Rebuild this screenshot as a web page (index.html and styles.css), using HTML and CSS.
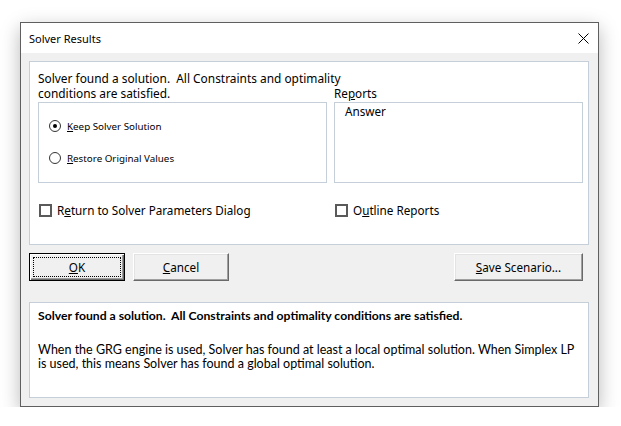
FILE: index.html
```html
<!DOCTYPE html>
<html>
<head>
    <title>Solver Results</title>
    <link rel="stylesheet" href="styles.css">
</head>
<body>
    <div class="dialog">
        <div class="titlebar">
            <span class="title">Solver Results</span>
            <svg class="close" width="11" height="11" viewBox="0 0 11 11">
                <path d="M0.5 0.5 L10.5 10.5 M10.5 0.5 L0.5 10.5" stroke="#000" stroke-width="1" fill="none"/>
            </svg>
        </div>

        <div class="client">
            <div class="panel">
                <div class="message first">Solver found a solution.&nbsp; All Constraints and optimality</div>
                <div class="message">conditions are satisfied.</div>
                <div class="reports-label">Re<u>p</u>orts</div>

                <div class="groupbox">
                    <label class="radio-row">
                        <span class="radio checked"></span>
                        <span><u>K</u>eep Solver Solution</span>
                    </label>
                    <label class="radio-row">
                        <span class="radio"></span>
                        <span><u>R</u>estore Original Values</span>
                    </label>
                </div>
                <div class="listbox">
                    <div class="list-item">Answer</div>
                </div>

                <label class="check-row">
                    <span class="checkbox"></span>
                    <span>R<u>e</u>turn to Solver Parameters Dialog</span>
                </label>
                <label class="check-row">
                    <span class="checkbox"></span>
                    <span>O<u>u</u>tline Reports</span>
                </label>
            </div>

            <div class="buttons">
                <button class="btn default"><u>O</u>K</button>
                <button class="btn"><u>C</u>ancel</button>
                <button class="btn wide"><u>S</u>ave Scenario...</button>
            </div>

            <div class="info">
                <p class="info-title">Solver found a solution.&nbsp; All Constraints and optimality conditions are satisfied.</p>
                <p class="info-text">When the GRG engine is used, Solver has found at least a local optimal solution. When Simplex LP is used, this means Solver has found a global optimal solution.</p>
            </div>
        </div>
    </div>
</body>
</html>
```

FILE: styles.css
```css
body {
    margin: 0;
    background: #fff;
    font-family: "Noto Sans", sans-serif;
    font-size: 11.7px;
    color: #000;
}

u {
    text-decoration: underline;
    text-underline-offset: 1px;
}

.dialog {
    width: 577px;
    height: 383px;
    margin: 22px 0 0 20px;
    border: 1px solid #5f5f5f;
    background: #f0f0f0;
    box-shadow: 0 6px 18px rgba(0, 0, 0, .28);
    display: flex;
    flex-direction: column;
}

.titlebar {
    flex-shrink: 0;
    height: 30px;
    background: #fff;
    display: flex;
    align-items: center;
    justify-content: space-between;
    padding: 0 9px 0 8px;
}

.title {
    font-size: 11px;
}

.client {
    flex: 1;
    display: flex;
    flex-direction: column;
    padding: 8px 9px 8px 8px;
}

.panel {
    flex-shrink: 0;
    height: 184px;
    box-sizing: border-box;
    background: #fff;
    border: 1px solid #c5cfd9;
    padding: 9px 5px 0 8px;
    display: grid;
    grid-template-columns: 289px 249px;
    grid-template-rows: 15px 15px 82px auto;
    column-gap: 7px;
}

.message {
    line-height: 15px;
    font-size: 11.9px;
    white-space: nowrap;
}

.message.first {
    grid-column: 1 / -1;
}

.reports-label {
    line-height: 15px;
}

.groupbox,
.listbox {
    border: 1px solid #c5cfd9;
    box-sizing: border-box;
    margin-top: 1px;
}

.groupbox {
    padding: 15px 0 0 10px;
    display: flex;
    flex-direction: column;
    gap: 16px;
}

.radio-row {
    display: flex;
    align-items: center;
    gap: 6px;
    height: 16px;
    font-size: 9.8px;
}

.radio {
    width: 10px;
    height: 10px;
    border: 1px solid #333;
    border-radius: 50%;
    background: #fff;
    position: relative;
}

.radio.checked::after {
    content: "";
    position: absolute;
    left: 3px;
    top: 3px;
    width: 4px;
    height: 4px;
    border-radius: 50%;
    background: #000;
}

.listbox {
    padding: 1px 10px;
    line-height: 15px;
}

.check-row {
    display: flex;
    align-items: center;
    gap: 5px;
    margin: 20px 0 0 1px;
    height: 14px;
}

.checkbox {
    width: 9px;
    height: 9px;
    border: 2px solid #5a5a5a;
    background: #fff;
}

.buttons {
    flex-shrink: 0;
    display: flex;
    gap: 8px;
    margin-top: 8px;
}

.btn {
    width: 96px;
    height: 28px;
    font-family: "Noto Sans", sans-serif;
    font-size: 11.7px;
    color: #000;
    background: #f0f0f0;
    border: 1px solid;
    border-color: #fff #696969 #696969 #fff;
    box-shadow: inset -1px -1px #a0a0a0, inset 1px 1px #e3e3e3;
    padding: 0;
}

.btn.default {
    border: 1px solid #000;
    box-shadow: inset 1px 1px #fff, inset -1px -1px #696969, inset -2px -2px #a0a0a0;
    outline: 1px dotted #000;
    outline-offset: -5px;
}

.btn.wide {
    width: 129px;
    margin-left: auto;
    margin-right: 6px;
}

.info {
    flex-shrink: 0;
    margin-top: 21px;
    height: 96px;
    box-sizing: border-box;
    background: #fff;
    border: 1px solid #c5cfd9;
    padding: 6px 10px 0 8px;
    font-family: Lato, sans-serif;
    font-size: 12.5px;
    line-height: 14px;
}

.info p {
    margin: 0;
}

.info-title {
    font-weight: bold;
    font-size: 12.2px;
    margin-bottom: 20px !important;
}
```
